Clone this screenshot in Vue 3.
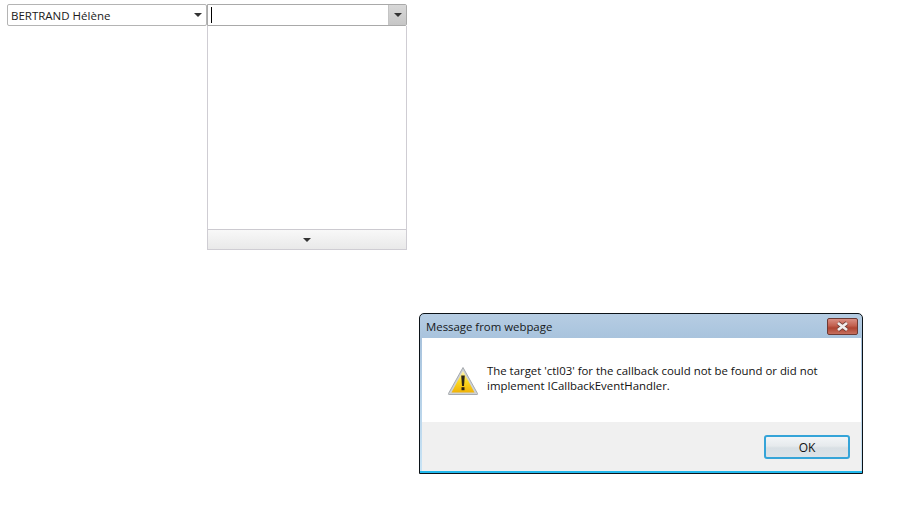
<script setup>
const message = ["The target 'ctl03' for the callback could not be found or did not", 'implement ICallbackEventHandler.']
</script>

<template>
  <div class="page">
    <div class="combos">
      <div class="combo">
        <div class="input">BERTRAND Hélène</div>
        <div class="arrow-cell"><span class="tri"></span></div>
      </div>
      <div class="combo-wrap">
        <div class="combo open">
          <div class="input"><span class="caret"></span></div>
          <div class="arrow-cell pressed"><span class="tri"></span></div>
        </div>
        <div class="dropdown">
          <div class="list"></div>
          <div class="foot"><span class="tri"></span></div>
        </div>
      </div>
    </div>

    <div class="dialog">
      <div class="titlebar">
        <span class="title">Message from webpage</span>
        <button class="close">
          <svg width="15" height="11" viewBox="0 0 15 11">
            <path d="M3 2 L12 9 M12 2 L3 9" stroke="#74403a" stroke-width="4.2" fill="none" />
            <path d="M3 2 L12 9 M12 2 L3 9" stroke="#f1eeee" stroke-width="2.8" fill="none" />
          </svg>
        </button>
      </div>
      <div class="inner">
        <div class="content">
          <svg class="warn" width="32" height="30" viewBox="0 0 32 30">
            <defs>
              <linearGradient id="warnFill" x1="0" y1="0" x2="0" y2="1">
                <stop offset="0" stop-color="#fff6b8" />
                <stop offset="0.5" stop-color="#fbd81f" />
                <stop offset="1" stop-color="#f0b208" />
              </linearGradient>
            </defs>
            <path d="M16 1.5 L30.5 27.5 Q31 28.5 30 28.5 L2 28.5 Q1 28.5 1.5 27.5 Z" fill="#cfd2d5" stroke="#a6aaae" stroke-width="1" stroke-linejoin="round" />
            <path d="M16 5 L27.5 26.5 L4.5 26.5 Z" fill="url(#warnFill)" />
            <path d="M14.2 9.5 L17.8 9.5 L17 20 L15 20 Z" fill="#2a2416" />
            <rect x="14.5" y="21.2" width="3" height="3" fill="#2a2416" />
          </svg>
          <div class="msg">
            <div v-for="line in message" :key="line">{{ line }}</div>
          </div>
        </div>
        <div class="actions">
          <button class="ok">OK</button>
        </div>
      </div>
    </div>
  </div>
</template>

<style>
html, body { margin: 0; background: #fff; }
</style>

<style scoped>
.page {
  position: relative;
  width: 917px;
  height: 522px;
  overflow: hidden;
  background: #fff;
  font-family: "Open Sans", "Noto Sans", sans-serif;
  color: #111;
}
.combos {
  display: flex;
  align-items: flex-start;
  padding: 4px 0 0 7px;
}
.combo {
  box-sizing: border-box;
  width: 200px;
  height: 22px;
  display: flex;
  border: 1px solid #b4b4b4;
  border-radius: 2px;
  background: #fff;
}
.combo.open { border-color: #a9a9a9; border-radius: 0 2px 2px 0; }
.input {
  flex: 1;
  display: flex;
  align-items: center;
  padding-left: 3px;
  font-size: 11.5px;
  color: #1a1a1a;
}
.caret {
  display: block;
  width: 1px;
  height: 16px;
  background: #000;
}
.arrow-cell {
  width: 17px;
  display: flex;
  align-items: center;
  justify-content: center;
}
.arrow-cell.pressed {
  background: linear-gradient(#d8d8d8, #c6c6c6);
  border-left: 1px solid #c4c4c4;
}
.tri {
  display: block;
  width: 0;
  height: 0;
  border-left: 4px solid transparent;
  border-right: 4px solid transparent;
  border-top: 4px solid #333;
}
.dropdown {
  box-sizing: border-box;
  height: 224px;
  border: 1px solid #cfcdd3;
  border-top: 0;
  display: flex;
  flex-direction: column;
}
.list { flex: 1; background: #fff; }
.foot {
  box-sizing: border-box;
  height: 20px;
  border-top: 1px solid #cccad0;
  background: linear-gradient(#f8f8f8, #e9e9e9);
  display: flex;
  align-items: center;
  justify-content: center;
}

.dialog {
  position: absolute;
  left: 419px;
  top: 313px;
  box-sizing: border-box;
  width: 444px;
  height: 161px;
  border: 1px solid #0c1318;
  border-radius: 5px 5px 0 0;
  background: linear-gradient(#b6cde3, #a8c3dd 25px, #c8e4f6);
  display: flex;
  flex-direction: column;
  box-shadow: inset 0 -2px 0 #22b8ec;
}
.titlebar {
  height: 24px;
  flex: none;
  display: flex;
  align-items: flex-start;
  justify-content: space-between;
  padding-left: 6px;
}
.title {
  font-size: 11.4px;
  line-height: 25px;
  color: #16181a;
}
.close {
  box-sizing: border-box;
  width: 31px;
  height: 17px;
  margin: 4px 4px 0 0;
  padding: 0;
  border: 1px solid #6d3a34;
  border-radius: 2px;
  background: linear-gradient(#d98f84, #c2604f 45%, #ae4432 60%, #c66f5e);
  display: flex;
  align-items: center;
  justify-content: center;
}
.inner {
  flex: 1;
  margin: 0 1px 2px 2px;
  display: flex;
  flex-direction: column;
  background: #fff;
}
.content {
  height: 84px;
  flex: none;
  box-sizing: border-box;
  display: flex;
  align-items: flex-start;
  padding: 28px 0 0 25px;
}
.warn { flex: none; }
.msg {
  margin: -3px 0 0 8px;
  font-size: 11.4px;
  line-height: 15px;
  color: #111;
  white-space: nowrap;
}
.actions {
  flex: 1;
  background: #f0f0f0;
  display: flex;
  justify-content: flex-end;
  align-items: flex-start;
  padding: 13px 11px 0 0;
}
.ok {
  box-sizing: border-box;
  width: 86px;
  height: 24px;
  padding: 0;
  border: 2px solid #35a4d8;
  border-radius: 3px;
  background: linear-gradient(#f2f5f7, #e6eaed 45%, #d8dfe4 55%, #dde3e8);
  font-family: inherit;
  font-size: 12px;
  color: #111;
}
</style>
